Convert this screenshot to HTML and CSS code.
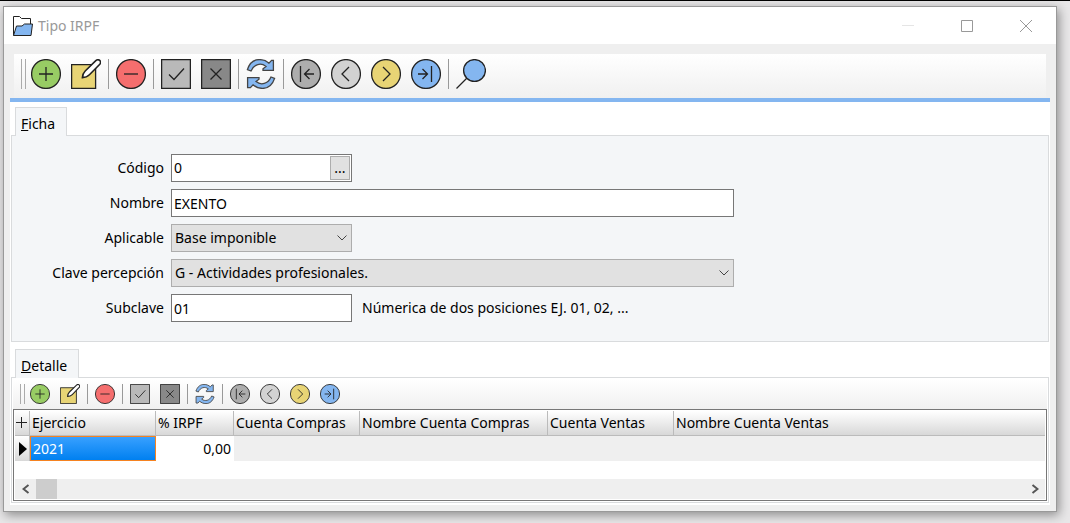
FILE: index.html
```
<!DOCTYPE html>
<html lang="es">
<head>
<meta charset="utf-8">
<title>Tipo IRPF</title>
<link rel="stylesheet" href="styles.css">
</head>
<body>
<svg class="sprite" aria-hidden="true">
  <symbol id="i-add" viewBox="0 0 30 30"><circle cx="15" cy="15" r="14.4" fill="#98cc64"/><path d="M15 8v14M8 15h14"/></symbol>
  <symbol id="i-edit" viewBox="0 0 30 30"><path d="M.6 5.6h24v23.8H.6z" fill="#e8d475"/><path d="M11.4 18.600c.2-2.800 1-4.800 2.800-6.600L24.800 1.600c2.800-2.400 6.200.8 4 3.600L18.400 15.800c-1.800 1.800-4 2.800-7 2.800z" fill="#fff" stroke-width="1.600"/></symbol>
  <symbol id="i-del" viewBox="0 0 30 30"><circle cx="15" cy="15" r="14.400" fill="#f56e6e"/><path d="M8 15h14"/></symbol>
  <symbol id="i-ok" viewBox="0 0 30 30"><path d="M.6.600h28.800v28.800H.6z" fill="#b9b9b9"/><path d="M8 15.500l5 5L23 9.500" fill="none"/></symbol>
  <symbol id="i-cancel" viewBox="0 0 30 30"><path d="M.6.600h28.800v28.800H.6z" fill="#888"/><path d="M9.500 9.500l11 11M20.500 9.500l-11 11"/></symbol>
  <symbol id="i-refresh" viewBox="0 0 30 30"><g fill="#84b6f0" stroke="#444"><path d="M1.400 10.600C3.500 4.200 8 .6 13.500.6c3.800 0 6.900 1.200 9.500 3.600L25.600 1.400h1.800v10H17V9.800l3-2.400C15 3.400 8 5 5 12z"/><path d="M28.600 19.400C26.500 25.800 22 29.400 16.500 29.400c-3.800 0-6.900-1.200-9.500-3.600L4.400 28.600H1.600V18.600H13v1.600l-3 2.400C15 26.600 22 25 25 18z"/></g></symbol>
  <symbol id="i-first" viewBox="0 0 30 30"><circle cx="15" cy="15" r="14.400" fill="#adadad"/><path d="M9.500 7v16M23 15H13.500M18.500 10l-5 5 5 5" fill="none"/></symbol>
  <symbol id="i-prev" viewBox="0 0 30 30"><circle cx="15" cy="15" r="14.400" fill="#d2d2d2"/><path d="M18 8l-7 7 7 7" fill="none"/></symbol>
  <symbol id="i-next" viewBox="0 0 30 30"><circle cx="15" cy="15" r="14.400" fill="#e8d475"/><path d="M12 8l7 7-7 7" fill="none"/></symbol>
  <symbol id="i-last" viewBox="0 0 30 30"><circle cx="15" cy="15" r="14.400" fill="#84b6f0"/><path d="M20.500 7v16M7 15h9.500M11.500 10l5 5-5 5" fill="none"/></symbol>
  <symbol id="i-find" viewBox="0 0 30 30"><path d="M.5 29.500L11 19"/><circle cx="18.500" cy="11.500" r="10.900" fill="#84b6f0"/></symbol>
</svg>

<main class="window">
  <header class="titlebar">
    <svg class="folder" viewBox="0 0 20 20" aria-hidden="true"><path d="M.5 19.500V.5h6l2 2h9v7" fill="#fff"/><path d="M.5 19.500l3-9.500h5.500l2.500-2h8L18 19.500z" fill="#84b6f0"/></svg>
    <h1 class="title">Tipo IRPF</h1>
    <button class="winbtn winbtn-off" type="button" aria-label="Minimizar" disabled><svg viewBox="0 0 12 12"><path d="M0 5.500h12"/></svg></button>
    <button class="winbtn" type="button" aria-label="Maximizar"><svg viewBox="0 0 12 12"><path d="M.5.500h11v11H.5z"/></svg></button>
    <button class="winbtn" type="button" aria-label="Cerrar"><svg viewBox="0 0 12 12"><path d="M0 0l12 12M12 0L0 12"/></svg></button>
  </header>

  <div class="toolbar toolbar-main" role="toolbar" aria-label="Ficha">
    <span class="grip"></span>
    <button type="button" aria-label="Nuevo"><svg><use href="#i-add"/></svg></button>
    <button type="button" aria-label="Editar"><svg><use href="#i-edit"/></svg></button>
    <span class="sep"></span>
    <button type="button" aria-label="Eliminar"><svg><use href="#i-del"/></svg></button>
    <span class="sep"></span>
    <button type="button" aria-label="Aceptar"><svg><use href="#i-ok"/></svg></button>
    <button type="button" aria-label="Cancelar"><svg><use href="#i-cancel"/></svg></button>
    <span class="sep"></span>
    <button type="button" aria-label="Actualizar"><svg><use href="#i-refresh"/></svg></button>
    <span class="sep"></span>
    <button type="button" aria-label="Primero"><svg><use href="#i-first"/></svg></button>
    <button type="button" aria-label="Anterior"><svg><use href="#i-prev"/></svg></button>
    <button type="button" aria-label="Siguiente"><svg><use href="#i-next"/></svg></button>
    <button type="button" aria-label="Último"><svg><use href="#i-last"/></svg></button>
    <span class="sep"></span>
    <button type="button" aria-label="Buscar"><svg><use href="#i-find"/></svg></button>
  </div>

  <div class="content">
    <section class="tabset">
      <button class="tab" type="button"><u>F</u>icha</button>
      <form class="panel form">
        <label for="codigo">Código</label>
        <div class="field field-short lookup">
          <input id="codigo" type="text" value="0">
          <button class="lookup-btn" type="button" aria-label="Buscar código">...</button>
        </div>
        <label for="nombre">Nombre</label>
        <input class="field" id="nombre" type="text" value="EXENTO">
        <label for="aplicable">Aplicable</label>
        <div class="field-short combo">
          <select id="aplicable"><option>Base imponible</option></select>
          <svg viewBox="0 0 10 6" aria-hidden="true"><path d="M.5.500L5 5 9.500.5"/></svg>
        </div>
        <label for="clave">Clave percepción</label>
        <div class="combo">
          <select id="clave"><option>G - Actividades profesionales.</option></select>
          <svg viewBox="0 0 10 6" aria-hidden="true"><path d="M.5.500L5 5 9.500.5"/></svg>
        </div>
        <label for="subclave">Subclave</label>
        <div class="hinted">
          <input class="field field-short" id="subclave" type="text" value="01">
          <span>Númerica de dos posiciones EJ. 01, 02, ...</span>
        </div>
      </form>
    </section>

    <section class="tabset tabset-detail">
      <button class="tab" type="button"><u>D</u>etalle</button>
      <div class="panel detail">
        <div class="toolbar toolbar-small" role="toolbar" aria-label="Detalle">
          <span class="grip"></span>
          <button type="button" aria-label="Nuevo"><svg><use href="#i-add"/></svg></button>
          <button type="button" aria-label="Editar"><svg><use href="#i-edit"/></svg></button>
          <span class="sep"></span>
          <button type="button" aria-label="Eliminar"><svg><use href="#i-del"/></svg></button>
          <span class="sep"></span>
          <button type="button" aria-label="Aceptar"><svg><use href="#i-ok"/></svg></button>
          <button type="button" aria-label="Cancelar"><svg><use href="#i-cancel"/></svg></button>
          <span class="sep"></span>
          <button type="button" aria-label="Actualizar"><svg><use href="#i-refresh"/></svg></button>
          <span class="sep"></span>
          <button type="button" aria-label="Primero"><svg><use href="#i-first"/></svg></button>
          <button type="button" aria-label="Anterior"><svg><use href="#i-prev"/></svg></button>
          <button type="button" aria-label="Siguiente"><svg><use href="#i-next"/></svg></button>
          <button type="button" aria-label="Último"><svg><use href="#i-last"/></svg></button>
        </div>
        <div class="grid">
          <table>
            <colgroup><col class="c-mark"><col class="c-wide"><col class="c-pct"><col class="c-wide"><col class="c-name"><col class="c-wide"><col></colgroup>
            <thead>
              <tr>
                <th class="mark"><button type="button" aria-label="Columnas"><svg viewBox="0 0 11 11"><path d="M5.500 0v11M0 5.500h11"/></svg></button></th>
                <th>Ejercicio</th><th>% IRPF</th><th>Cuenta Compras</th><th>Nombre Cuenta Compras</th><th>Cuenta Ventas</th><th>Nombre Cuenta Ventas</th>
              </tr>
            </thead>
            <tbody>
              <tr>
                <td class="mark"><svg viewBox="0 0 8 14"><path class="arrow" d="M0 0l8 7-8 7z"/></svg></td>
                <td class="selected">2021</td><td class="number">0,00</td><td></td><td></td><td></td><td></td>
              </tr>
            </tbody>
          </table>
          <div class="scrollbar">
            <button type="button" aria-label="Desplazar a la izquierda"><svg viewBox="0 0 8 10"><path d="M6.500 1l-5 4 5 4"/></svg></button>
            <span class="thumb"></span>
            <button type="button" aria-label="Desplazar a la derecha"><svg viewBox="0 0 8 10"><path d="M1.500 1l5 4-5 4"/></svg></button>
          </div>
        </div>
      </div>
    </section>
  </div>
</main>
</body>
</html>
```
FILE: styles.css
```
* { box-sizing: border-box; }

body {
  margin: 0;
  min-height: 100vh;
  display: flex;
  padding: 5px 13px 11px 3px;
  border-top: 1px solid #000;
  background: #e8e7e8;
  color: #000;
  font: 14px/20px "Noto Sans", "Open Sans", sans-serif;
}

button, input, select { font: inherit; color: inherit; margin: 0; }
button { padding: 0; border: 0; background: none; }
svg { display: block; fill: none; stroke: #222; }
.sprite { position: absolute; width: 0; height: 0; }

.window {
  flex: 1;
  min-width: 0;
  display: flex;
  flex-direction: column;
  border: 1px solid #999;
  background: #efefef;
  box-shadow: 2px 3px 10px rgba(0, 0, 0, .4);
}

.titlebar {
  display: flex;
  align-items: center;
  height: 37px;
  padding: 0 1px 0 9px;
  background: #fff;
}
.folder { width: 20px; height: 20px; }
.title { flex: 1; margin: 0 0 0 5px; font-size: 14px; font-weight: 400; color: #999; }
.winbtn { display: grid; place-items: center; width: 59px; height: 37px; }
.winbtn svg { width: 12px; height: 12px; stroke: #999; }
.winbtn-off svg { stroke: #e5e5e5; }

.toolbar { display: flex; align-items: center; background: linear-gradient(#fff, #f0f0f0); }
.toolbar svg { width: 100%; height: 100%; stroke-width: 1.3; }
.grip { width: 5px; border: solid #aaa; border-width: 0 1px; }
.sep { width: 1px; margin: 0 2px; background: #999; }

.toolbar-main { margin: 10px 10px 0; padding: 4px 0 8px 7px; height: 44px; }
.toolbar-main button { width: 30px; height: 30px; margin: 0 5px; }
.toolbar-main .grip, .toolbar-main .sep { height: 30px; }
.toolbar-small { height: 30px; padding: 0 0 0 7px; }
.toolbar-small button { width: 20px; height: 20px; margin: 0 5px; }
.toolbar-small .grip, .toolbar-small .sep { height: 20px; }

.content {
  flex: 1;
  display: flex;
  flex-direction: column;
  gap: 7px;
  margin: 0 6px 6px;
  padding: 5px 1px 2px;
  border-top: 4px solid #84b6f0;
  background: #fff;
}
.tabset { display: flex; flex-direction: column; align-items: stretch; }
.tabset-detail { flex: 1; }
.tab {
  align-self: flex-start;
  height: 29px;
  margin: 0 0 -1px 4px;
  padding: 4px 11px 0 5px;
  border: 1px solid #d9dbdd;
  border-bottom: 0;
  background: #f4f6f8;
  z-index: 1;
}
.panel { border: 1px solid #d9dbdd; background: #f4f6f8; }

.form {
  display: grid;
  grid-template-columns: 152px minmax(0, 563px);
  column-gap: 7px;
  row-gap: 7px;
  padding: 18px 0 19px;
}
.form label { text-align: right; line-height: 28px; }
.field, .combo select { width: 100%; height: 28px; border: 1px solid #777; border-radius: 0; background: #fff; }
input.field { padding: 0 2px; outline: 0; }
.field-short, .field.field-short { width: 181px; }
.lookup { display: flex; padding: 1px; }
.lookup input { flex: 1; min-width: 0; padding: 0 1px; border: 0; outline: 0; }
.lookup-btn { width: 20px; border: 1px solid #adadad; background: #e1e1e1; line-height: 20px; }
.combo { display: grid; align-items: center; }
.combo > * { grid-area: 1 / 1; }
.combo select { appearance: none; padding: 0 24px 0 3px; border-color: #adadad; background: #e1e1e1; }
.combo svg { justify-self: end; width: 10px; height: 6px; margin-right: 5px; stroke: #444; pointer-events: none; }
.hinted { display: flex; align-items: center; gap: 10px; }
.hinted span { white-space: nowrap; }

.detail { flex: 1; display: flex; flex-direction: column; padding: 1px; background: #fff; }
.grid { flex: 1; display: flex; flex-direction: column; padding: 1px; border: 1px solid #777; }
table { width: 100%; table-layout: fixed; border-collapse: separate; border-spacing: 0; }
.c-mark { width: 15px; }
.c-wide { width: 126px; }
.c-pct { width: 78px; }
.c-name { width: 188px; }
th {
  height: 25px;
  padding: 0 2px;
  border: solid #bbb;
  border-width: 0 1px 1px 0;
  background: linear-gradient(#fff, #d8d8d8);
  font-weight: 400;
  text-align: left;
  white-space: nowrap;
}
th:last-child { border-right: 0; }
td { height: 25px; padding: 0 3px; background: #efefef; }
th.mark { padding: 0 1px; }
th.mark svg { width: 11px; height: 11px; }
td.mark { padding: 0 2px 0 4px; border-right: 1px solid #bbb; background: linear-gradient(#fff, #d8d8d8); }
td.mark svg { width: 8px; height: 14px; stroke: none; }
.arrow { fill: #000; }
td.selected { border: 1px solid #f58220; background: linear-gradient(#38a0ff, #0080f0); color: #fff; padding: 0 2px; }
td.number { background: #fff; text-align: right; }

.scrollbar { display: flex; align-items: stretch; height: 20px; margin-top: auto; background: #efefef; }
.scrollbar button { display: grid; place-items: center; width: 21px; }
.scrollbar svg { width: 8px; height: 10px; stroke: #555; stroke-width: 2; }
.scrollbar button:last-child { margin-left: auto; }
.thumb { width: 21px; background: #cdcdcd; }
```
